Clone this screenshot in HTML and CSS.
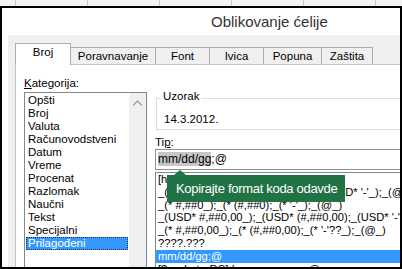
FILE: index.html
```html
<!DOCTYPE html>
<html lang="sr">
<head>
    <meta charset="UTF-8">
    <meta name="viewport" content="width=device-width, initial-scale=1.0">
    <title>Oblikovanje ćelije</title>
    <link rel="stylesheet" href="styles.css">
</head>
<body>
    <div class="sheet-strip">
        <span class="first"></span><span></span><span></span><span></span><span></span><span></span><span></span>
    </div>

    <div class="window">
        <div class="titlebar">Oblikovanje ćelije</div>

        <div class="dialog">
            <div class="tabs">
                <div class="tab active" style="width:56px">Broj</div>
                <div class="tab" style="width:85px">Poravnavanje</div>
                <div class="tab" style="width:54px">Font</div>
                <div class="tab" style="width:54px">Ivica</div>
                <div class="tab" style="width:58px">Popuna</div>
                <div class="tab" style="width:51px">Zaštita</div>
            </div>

            <div class="panel">
                <div class="col-left">
                    <div class="label"><u>K</u>ategorija:</div>
                    <div class="listbox">
                        <ul class="items">
                            <li>Opšti</li>
                            <li>Broj</li>
                            <li>Valuta</li>
                            <li>Računovodstveni</li>
                            <li>Datum</li>
                            <li>Vreme</li>
                            <li>Procenat</li>
                            <li>Razlomak</li>
                            <li>Naučni</li>
                            <li>Tekst</li>
                            <li>Specijalni</li>
                            <li class="selected">Prilagođeni</li>
                        </ul>
                        <div class="scrollbar">
                            <svg width="17" height="14" viewBox="0 0 17 14">
                                <path d="M4 8.5 L8.5 4 L13 8.5" fill="none" stroke="#a3a3a3" stroke-width="1.5"/>
                            </svg>
                        </div>
                    </div>
                </div>

                <div class="col-right">
                    <fieldset class="sample">
                        <legend>Uzorak</legend>
                        <div class="sample-value">14.3.2012.</div>
                    </fieldset>

                    <div class="label tip-label">Ti<u>p</u>:</div>
                    <div class="type-input"><span class="sel">mm/dd/gg</span>;@</div>

                    <div class="format-wrap">
                        <ul class="format-list">
                            <li>[h]:mm:ss</li>
                            <li>_(USD* #,##0_);_(USD* (#,##0);_(USD* '-'_);_(@_)</li>
                            <li>_(* #,##0_);_(* (#,##0);_(* '-'_);_(@_)</li>
                            <li>_(USD* #,##0,00_);_(USD* (#,##0,00);_(USD* '-'??_);_(@_)</li>
                            <li>_(* #,##0,00_);_(* (#,##0,00);_(* '-'??_);_(@_)</li>
                            <li>????.???</li>
                            <li class="selected">mm/dd/gg;@</li>
                            <li>[$-sr-Latn-RS]d. mmmm yyyy.;@</li>
                        </ul>
                        <div class="tooltip">Kopirajte format koda odavde</div>
                    </div>
                </div>
            </div>
        </div>
    </div>
</body>
</html>
```

FILE: styles.css
```css
body {
    margin: 0;
    width: 402px;
    height: 269px;
    overflow: hidden;
    background-color: #f3f3f3;
    font-family: "Liberation Sans", Arial, sans-serif;
    font-size: 11.5px;
    color: #000;
}
ul {
    list-style: none;
    margin: 0;
    padding: 0;
}

.sheet-strip {
    display: flex;
    height: 6px;
}
.sheet-strip span {
    flex: none;
    width: 72px;
    box-sizing: border-box;
    border-left: 1px solid #c6c6c6;
}
.sheet-strip span.first {
    width: 15px;
    border-left: none;
}

.window {
    height: 263px;
    box-sizing: border-box;
    border: 2px solid #000;
    background-color: #fff;
    display: flex;
    flex-direction: column;
    overflow: hidden;
}
.titlebar {
    height: 27px;
    line-height: 27px;
    padding-left: 209px;
    font-size: 15px;
    color: #333;
}
.dialog {
    flex: 1;
    min-height: 0;
    margin-left: 6px;
    padding: 8px 0 0 7px;
    background-color: #f0f0f0;
    display: flex;
    flex-direction: column;
}

.tabs {
    display: flex;
    align-items: flex-end;
    height: 21px;
    flex: none;
}
.tab {
    height: 17px;
    box-sizing: border-box;
    border-top: 1px solid #adadad;
    border-right: 1px solid #adadad;
    line-height: 16px;
    text-align: center;
    background-color: #f0f0f0;
}
.tab.active {
    height: 22px;
    margin-bottom: -1px;
    padding-bottom: 1px;
    border-left: 1px solid #adadad;
    background-color: #fff;
    position: relative;
    z-index: 1;
}

.panel {
    flex: 1;
    min-height: 0;
    display: flex;
    gap: 8px;
    padding: 11px 0 0 8px;
    background-color: #fff;
    border-top: 1px solid #c4c4c4;
    border-left: 1px solid #c4c4c4;
    overflow: hidden;
}
.label {
    line-height: 14px;
}

.col-left {
    flex: none;
    width: 123px;
}
.listbox {
    margin-top: 2px;
    height: 200px;
    box-sizing: border-box;
    border: 1px solid #828790;
    display: flex;
}
.items {
    flex: 1;
    padding: 1px 1px 0 1px;
}
.items li {
    height: 13px;
    line-height: 13px;
    padding-left: 2px;
    white-space: nowrap;
}
.items li.selected {
    background-color: #3399ff;
    color: #fff;
    outline: 1px dotted #333;
    outline-offset: -1px;
}
.scrollbar {
    flex: none;
    width: 17px;
    background-color: #f0f0f0;
}
.scrollbar svg {
    display: block;
    margin-top: 4px;
}

.col-right {
    flex: 1;
    min-width: 0;
}
.sample {
    margin: 13px 0 0 1px;
    padding: 0 0 3px 4px;
    border: 1px solid #dcdcdc;
    border-right: none;
    min-width: 0;
}
.sample legend {
    padding: 0 2px 4px 2px;
    line-height: 14px;
}
.sample-value {
    margin-top: 5px;
    padding-left: 3px;
    line-height: 14px;
}
.tip-label {
    margin-top: 5px;
}
.type-input {
    height: 21px;
    box-sizing: border-box;
    border: 1px solid #8f8f8f;
    border-right: none;
    padding-left: 2px;
    line-height: 19px;
    font-size: 12px;
}
.type-input .sel {
    background-color: #c6c6c6;
}

.format-wrap {
    position: relative;
    margin-top: 2px;
}
.format-list {
    height: 200px;
    box-sizing: border-box;
    border: 1px solid #828790;
    border-right: none;
    overflow: hidden;
    font-size: 11.2px;
}
.format-list li {
    height: 12.8px;
    line-height: 12.8px;
    padding-left: 2px;
    white-space: nowrap;
}
.format-list li.selected {
    background-color: #3399ff;
    color: #fff;
}

.tooltip {
    position: absolute;
    left: 12px;
    top: 3px;
    width: 178px;
    height: 27px;
    box-sizing: border-box;
    padding-left: 9px;
    background-color: #217346;
    color: #fff;
    font-size: 13px;
    letter-spacing: -0.3px;
    line-height: 27px;
    white-space: nowrap;
}
.tooltip::before {
    content: "";
    position: absolute;
    left: 7px;
    top: -5px;
    border-left: 6px solid transparent;
    border-right: 6px solid transparent;
    border-bottom: 5px solid #217346;
}
```
